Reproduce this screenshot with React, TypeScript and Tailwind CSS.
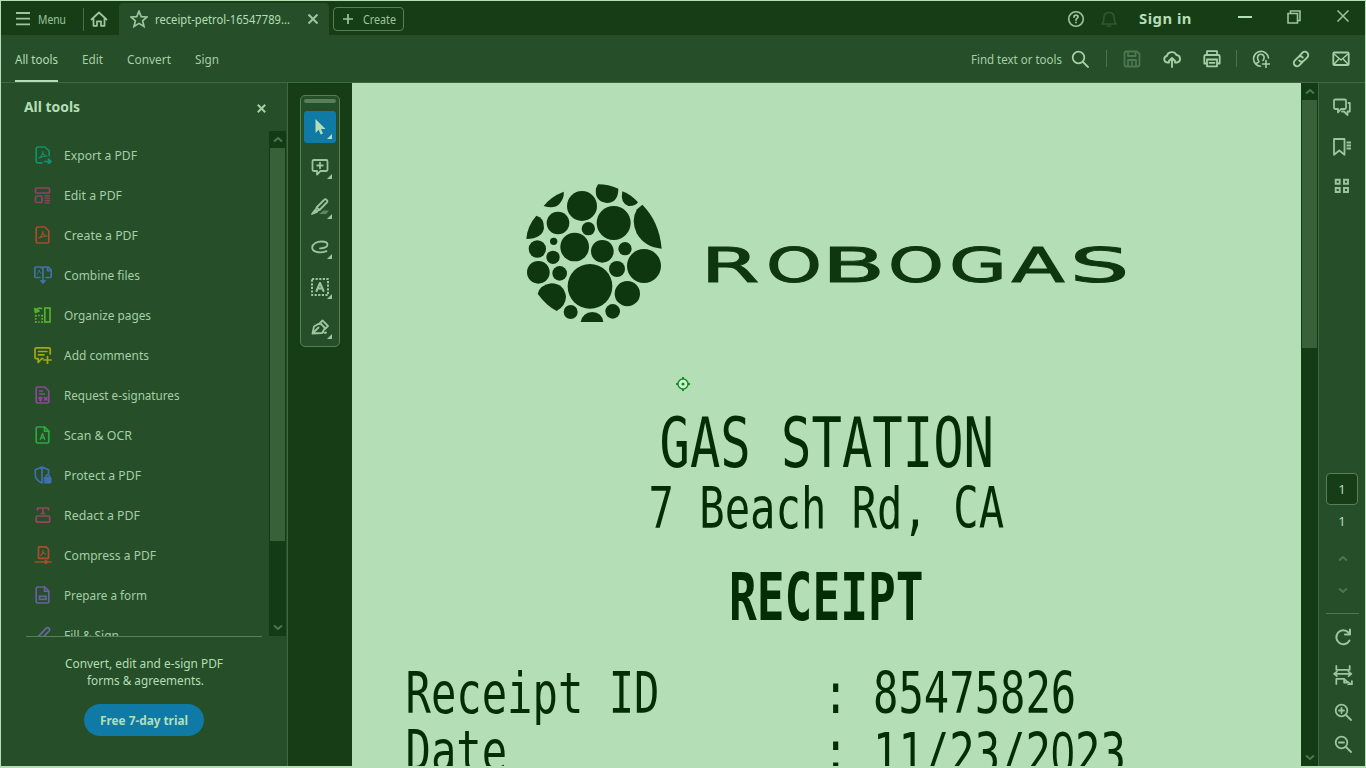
import { useLayoutEffect, useRef, type ReactNode } from "react";

/** Text squeezed horizontally so that it takes exactly `w` pixels. */
function Fit({ w, className = "", children }: { w: number; className?: string; children: string }) {
  const ref = useRef<HTMLSpanElement>(null);
  useLayoutEffect(() => {
    const el = ref.current;
    if (el && el.offsetWidth) {
      el.style.transform = "none";
      el.style.transform = `scaleX(${w / el.getBoundingClientRect().width})`;
    }
  }, [w, children]);
  return (
    <span className={`flex shrink-0 ${className}`} style={{ width: w }}>
      <span ref={ref} className="block origin-left whitespace-nowrap">
        {children}
      </span>
    </span>
  );
}

function Ico({ s = 18, sw = 1.8, className = "", children }: { s?: number; sw?: number; className?: string; children: ReactNode }) {
  return (
    <svg width={s} height={s} viewBox="0 0 18 18" fill="none" stroke="currentColor" strokeWidth={sw} strokeLinecap="round" strokeLinejoin="round" className={`shrink-0 ${className}`}>
      {children}
    </svg>
  );
}

const DOC = "M3.6 1h7.2l4 4v10.6a1.4 1.4 0 0 1-1.4 1.4H3.6a1.4 1.4 0 0 1-1.4-1.4V2.4A1.4 1.4 0 0 1 3.6 1Z";
const SWOOSH = "M5 12c2-1 4-4 3.8-6.6 0 3.3 2 4.800 4.200 4.600-3 0-5 .6-8 2Z";

const tools: { label: string; w: number; color: string; icon: ReactNode }[] = [
  { label: "Export a PDF", w: 73, color: "text-[#11906b]", icon: <><path d="M15.200 9.500V5L11 1H3.800A1.500 1.500 0 0 0 2.200 2.500v12.800A1.500 1.500 0 0 0 3.800 16.800H8" /><path d={SWOOSH} strokeWidth="1.100" /><path d="M10.500 15.500h5M14.500 13.200l2.500 2.300-2.500 2.300Z" fill="currentColor" /></> },
  { label: "Edit a PDF", w: 58, color: "text-[#8f4360]", icon: <><rect x="1.500" y="2" width="14" height="5" rx="1" /><rect x="1.500" y="10" width="6.500" height="6.500" rx="1" /><path d="M10.500 9.800h5.500M10.500 12.200h5.500M10.500 14.500h5.500M10.500 16.800h5.500" strokeWidth="1.300" strokeLinecap="butt" /></> },
  { label: "Create a PDF", w: 74, color: "text-[#a84e2c]", icon: <><path d={DOC} /><path d={SWOOSH} strokeWidth="1.100" /></> },
  { label: "Combine files", w: 76, color: "text-[#4470a8]", icon: <><path d="M6 11.500H1.800A1.200 1.200 0 0 1 .8 10.300V2.200A1.200 1.200 0 0 1 2 1h4.800L9 3v7M9 3.200A1.400 1.400 0 0 1 10.400 1h4.100L17.200 4v6.300a1.200 1.200 0 0 1-1.200 1.200h-4M13.500 1.500v3.200H17" /><path d="M2.800 8.500c1.500-1 2.500-3 2.500-4.500 0 2 1 3 2 3.200" strokeWidth="1" /><path d="M9 10v6.500M7 14.800h4L9 17Z" fill="currentColor" /></> },
  { label: "Organize pages", w: 87, color: "text-[#55b02c]", icon: <><rect x="10.800" y="2" width="5.200" height="14" strokeLinejoin="miter" /><path d="M1.500 6C2 3 5 1.500 7.500 2.500" /><path d="M.800 2.500l.7 4 3.500-1.500Z" fill="currentColor" /><path d="M1 9.500h8M1 16h8" strokeDasharray="1.700 1.400" strokeLinecap="butt" /><path d="M1.700 9v8M8.200 9v8" strokeDasharray="1.700 1.400" strokeLinecap="butt" /></> },
  { label: "Add comments", w: 85, color: "text-[#a3aa09]", icon: <><path d="M16.200 8V3A1.200 1.200 0 0 0 15 1.800H2.200A1.200 1.200 0 0 0 1 3v8.500a1.200 1.200 0 0 0 1.200 1.200h2v3.800l3.500-3.800H9M4.500 5.500h8.500M4.500 8.800h5.500" /><path d="M13.500 10.500v7M10 14h7" /></> },
  { label: "Request e-signatures", w: 115.5, color: "text-[#8b4a96]", icon: <><path d={DOC} /><path d="M5 5h4M5 8h6" strokeLinecap="butt" /><path d="M5 11.500h3L6.500 15ZM10.500 11.500l2.500 2.500M13 11.500 10.500 14" /></> },
  { label: "Scan & OCR", w: 68, color: "text-[#2ca83c]", icon: <><path d={DOC} /><path d="M10.500 1v4.200h4.200" /><path d="M6.300 13.500 8.500 7.500l2.200 6M7 11.700h3" strokeWidth="1.400" /></> },
  { label: "Protect a PDF", w: 77, color: "text-[#3f6fae]", icon: <><path d="M14.500 7.500V3.800L8 1 1.300 3.800v5.500c0 3.500 3 6 6.700 7.700V1" /><rect x="10.500" y="11.500" width="6.500" height="5.500" fill="currentColor" strokeWidth="1" /><path d="M12 11.500v-1.300a1.800 1.800 0 0 1 3.500 0v1.300" /></> },
  { label: "Redact a PDF", w: 76, color: "text-[#944660]", icon: <><path d="M3.500 3.800V2h11v1.800M9 2v5.500M7.500 7.500h3" /><rect x="2.200" y="10" width="13.500" height="6.200" rx="1" /></> },
  { label: "Compress a PDF", w: 92, color: "text-[#a84e2c]", icon: <><path d="M5.500.8h6.500l2.500 2.500v9H4.500V1.800a1 1 0 0 1 1-1Z" /><path d="M6.700 9.500C8 8.500 9 6.500 9 4.500c0 2.500 1.500 3.500 3 3.500" strokeWidth="1.100" /><path d="M1.200 16H17M11.500 14.500v3l2-1.500Z" /></> },
  { label: "Prepare a form", w: 83, color: "text-[#66619f]", icon: <><path d={DOC} /><path d="M10.500 1v4.200h4.200" /><rect x="5.500" y="10.300" width="6.500" height="3" strokeLinejoin="miter" /></> },
  { label: "Fill & Sign", w: 55, color: "text-[#6c68a2]", icon: <path d="M2.500 16l1-4.500L12 2.300a2 2 0 0 1 3 2.700L6.500 14Z" /> },
];

function Chevron({ up = false, className = "" }: { up?: boolean; className?: string }) {
  return (
    <svg width="10" height="7" viewBox="0 0 10 7" fill="none" stroke="currentColor" strokeWidth="2" className={className}>
      <path d={up ? "M1 5.500 5 2l4 3.500" : "M1 1.500 5 5l4-3.500"} />
    </svg>
  );
}

function TitleBar() {
  return (
    <header className="flex h-[34px] shrink-0 bg-[#173d17] text-[#9bc59d]">
      <div className="flex w-[118px] items-center pt-[2px]">
        <Ico className="ml-[13px]"><path d="M2 3h14M2 8.700h14M2 14.300h14" strokeWidth="1.800" strokeLinecap="butt" /></Ico>
        <Fit w={28} className="ml-[6px]">Menu</Fit>
        <i className="ml-[17px] h-[23px] w-px bg-[#44704a]" />
        <Ico className="ml-[6px]"><path d="m1.500 9.500 7.500-7 7.500 7M3.500 8.500v7.300H7v-4.500h4v4.500h3.500V8.500" /></Ico>
      </div>
      <div className="mt-[2px] flex w-[210px] items-center rounded-t-[4px] bg-[#264e28] text-[#b4deb6]">
        <Ico className="ml-[11px] text-[#9bc59d]" sw={1.700}><path d="m9 1.200 2.200 5.400 5.900.4-4.500 3.800 1.400 5.700-5-3.100-5 3.100 1.400-5.700L.9 7l5.900-.4Z" strokeLinejoin="miter" /></Ico>
        <Fit w={135} className="ml-[7px]">receipt-petrol-16547789...</Fit>
        <svg width="10" height="10" viewBox="0 0 10 10" fill="none" stroke="currentColor" strokeWidth="2.100" className="ml-[18px] text-[#9bc59d]"><path d="m.500.500 9 9M9.500.500l-9 9" /></svg>
      </div>
      <div className="ml-[4px] mt-[6px] flex h-[24px] w-[71px] items-center rounded-[4px] border border-[#568059]">
        <svg width="10" height="10" viewBox="0 0 10 10" stroke="currentColor" strokeWidth="1.700" className="ml-[9px]"><path d="M5 0v10M0 5h10" /></svg>
        <Fit w={33} className="ml-[10px]">Create</Fit>
      </div>
      <div className="ml-auto flex">
        <Ico className="mt-[9px]" sw={1.600}><circle cx="9" cy="9" r="7.300" /><path d="M7 7c0-2.600 4-2.600 4 0 0 1.300-2 1.500-2 3M9 12.300v.3" strokeWidth="1.800" /></Ico>
        <Ico className="ml-[15px] mt-[9px] text-[#31572f]" sw={1.700}><path d="M2 14c2-2 1.500-3.500 2-7 .3-3 2.500-4.500 5-4.500S13.700 4 14 7c.5 3.500 0 5 2 7ZM7.500 16h3" /></Ico>
        <Fit w={53} className="ml-[21px] mt-[6px] text-[15px] font-bold leading-[22px] tracking-[0.500px] text-[#b4deb6]">Sign in</Fit>
        <svg width="14" height="2" viewBox="0 0 14 2" className="ml-[46px] mt-[15px] bg-[#b4deb6]" />
        <svg width="14" height="14" viewBox="0 0 14 14" fill="none" stroke="currentColor" strokeWidth="1.600" className="ml-[35px] mt-[9px]"><path d="M1 3.500h9.500V13H1ZM3.500 3.500V1H13v9.500h-2.500" /></svg>
        <svg width="12" height="12" viewBox="0 0 12 12" stroke="currentColor" strokeWidth="1.500" className="ml-[36px] mr-[16px] mt-[9px]"><path d="m.500.500 11 11M11.500.500l-11 11" /></svg>
      </div>
    </header>
  );
}

function ToolBar() {
  return (
    <nav className="flex h-[48px] shrink-0 items-center border-b border-[#3e6942] bg-[#264e28] text-[#a5cfa7]">
      <div className="ml-[14px] flex h-full flex-col items-center justify-between text-[#b4deb6]">
        <Fit w={43} className="mt-[15px]">All tools</Fit>
        <i className="h-[2px] w-full bg-[#b4deb6]" />
      </div>
      <Fit w={21} className="ml-[24px]">Edit</Fit>
      <Fit w={44} className="ml-[24px]">Convert</Fit>
      <Fit w={24} className="ml-[24px]">Sign</Fit>
      <div className="ml-auto flex items-center">
        <Fit w={91}>Find text or tools</Fit>
        <Ico className="ml-[9px]"><circle cx="7.500" cy="7.500" r="5.800" /><path d="m12 12 5 5" /></Ico>
        <i className="ml-[17px] h-[17px] w-px bg-[#48754c]" />
        <Ico className="ml-[16px] text-[#4b784f]"><path d="M1.500 3A1.500 1.500 0 0 1 3 1.500h11L16.500 4v11a1.500 1.500 0 0 1-1.500 1.500H3A1.500 1.500 0 0 1 1.500 15ZM5 1.500v4.500h7.500V1.500M5 16.500V10h8v6.500M9 12v2.500" /></Ico>
        <Ico className="ml-[22px]" sw={1.900}><path d="M6 12.500H4.300A3.300 3.300 0 0 1 3.800 6 5.200 5.200 0 0 1 13.500 5a3.800 3.800 0 0 1 .5 7.500h-2M9 17V8.500M6 11l3-3 3 3" /></Ico>
        <Ico className="ml-[22px]"><path d="M4 5V1.200h10V5M4 13.500H1.300V6.200A1.200 1.200 0 0 1 2.500 5h13a1.200 1.200 0 0 1 1.200 1.200v7.300H14M4 9.500h10v6.800H4ZM6.500 12.800h5" /></Ico>
        <i className="ml-[15px] h-[17px] w-px bg-[#48754c]" />
        <Ico className="ml-[15px]" sw={1.600}><path d="M8.500 16.300A7.500 7.500 0 1 1 16.500 8M3.500 14c1-1.500 3.500-1.300 3.500-2.500C4.800 9 5 4.300 8.800 4.300s4 4 2.200 6.200M14 10.500v7M10.500 14h7" /></Ico>
        <Ico className="ml-[22px]" sw={1.900}><path d="m7.500 6 3-3.300a3.300 3.300 0 0 1 4.800 4.600L12 10.700a3.100 3.100 0 0 1-4.800-.2M10.500 12l-3 3.200a3.300 3.300 0 0 1-4.800-4.600L6 7.300a3.100 3.100 0 0 1 4.800.3" /></Ico>
        <Ico className="ml-[22px] mr-[15px]"><rect x="1.300" y="2.500" width="15.400" height="12.500" rx="1" /><path d="m2 4 7 6 7-6M2 14.300l5-5.500M16 14.300l-5-5.500" strokeWidth="1.500" /></Ico>
      </div>
    </nav>
  );
}

function ToolPanel() {
  return (
    <aside className="flex w-[287px] shrink-0 flex-col border-r border-[#3e6942] bg-[#264e28] text-[#a5cfa7]">
      <div className="flex h-[48px] shrink-0 items-center">
        <Fit w={56} className="ml-[23px] text-[14px] font-bold text-[#b4deb6]">All tools</Fit>
        <svg width="9" height="9" viewBox="0 0 9 9" stroke="currentColor" strokeWidth="2" className="ml-auto mr-[21px] mt-[3px]"><path d="m.800.800 7.400 7.400M8.200.800.800 8.200" /></svg>
      </div>
      <div className="flex h-[505px] shrink-0">
        <ul className="h-full w-[268px] overflow-hidden pt-[4px]">
          {tools.map((t) => (
            <li key={t.label} className="flex h-[40px] items-center">
              <Ico className={`ml-[33px] ${t.color}`} sw={1.700}>{t.icon}</Ico>
              <Fit w={t.w} className="ml-[12px]">{t.label}</Fit>
            </li>
          ))}
        </ul>
        <div className="flex w-[17px] flex-col items-center bg-[#133b15] text-[#4b784f]">
          <div className="flex h-[17px] items-center"><Chevron up /></div>
          <i className="h-[393px] w-[15px] bg-[#386139]" />
          <Chevron className="mb-[5px] mt-auto" />
        </div>
      </div>
      <div className="ml-[25px] h-px w-[236px] shrink-0 bg-[#568059]" />
      <div className="flex flex-col items-center pt-[18px] leading-[17px] text-[#b4deb6]">
        <Fit w={158}>Convert, edit and e-sign PDF</Fit>
        <Fit w={117} className="ml-[2px]">forms &amp; agreements.</Fit>
        <button className="mt-[15px] flex h-[32px] w-[120px] items-center justify-center rounded-full bg-[#107aa6] font-bold">
          <Fit w={88}>Free 7-day trial</Fit>
        </button>
      </div>
    </aside>
  );
}

function Palette() {
  const items: ReactNode[] = [
    <path d="M4.500 1v14l3.200-3.200 2 4.700 2.300-1-2-4.500H14.500Z" fill="currentColor" stroke="none" />,
    <path d="M2.500 2h12.800A1.200 1.200 0 0 1 16.500 3.200v8.600a1.200 1.200 0 0 1-1.200 1.200H9.500L6 16.500V13H2.700a1.200 1.200 0 0 1-1.200-1.200V3.200A1.200 1.200 0 0 1 2.500 2ZM9 4.700v5.600M6.200 7.500h5.600" />,
    <><path d="M5.500 9.500 13 2a1.700 1.700 0 0 1 2.800 2.500L8.500 12ZM5.500 9.500l-1 3 1 .7 3-1.200" /><path d="m4 12 2 2-5 2Z" fill="currentColor" /><path d="M8 16l4.500-3.500H18l-3 3.500Z" fill="#5c8a5e" stroke="none" /></>,
    <path d="M15.500 13.200C8 16 1 13.500 1.200 9.500 1.500 5.500 6 3.500 10.500 3.500c3.500 0 6 1 6 3 0 2.500-3.500 4-7.500 3.800" />,
    <><rect x="1" y="1" width="16" height="16" strokeDasharray="2.200 1.400" strokeLinecap="butt" strokeWidth="2" /><path d="M5.500 13 9 5l3.500 8M6.800 10.500h4.400" strokeWidth="2.100" /></>,
    <path d="M1.500 15.500 3 8.500 9 5l5 5-3 5-9.500.5ZM1.500 15.500l6-6M9 5l2.500-2.500L17 8l-3 3M11 15c1.500-3 2 1.500 4-.5" />,
  ];
  return (
    <div className="flex w-[64px] shrink-0 flex-col items-center bg-[#173d17] pt-[12px] text-[#9bc59d]">
      <div className="flex h-[252px] w-[40px] flex-col items-center rounded-[5px] border border-[#568059] bg-[#264e28] pt-[3px]">
        <i className="h-[4px] w-[32px] shrink-0 rounded-full bg-[#568059]" />
        <div className="mt-[8px] flex flex-col gap-[8px]">
          {items.map((icon, i) => (
            <div key={i} className={`relative flex h-[32px] w-[32px] items-center justify-center rounded-[3px] ${i === 0 ? "bg-[#107aa6] text-[#b4deb6]" : ""}`}>
              <Ico>{icon}</Ico>
              <svg width="5" height="5" viewBox="0 0 5 5" className="absolute bottom-[4px] right-[4px]"><path d="M5 0v5H0Z" fill="currentColor" /></svg>
            </div>
          ))}
        </div>
      </div>
    </div>
  );
}

const bubbles = [
  [216, 108, 45], [144, 159, 34], [235, 176, 20], [311, 159, 51], [194, 231, 43], [131, 214, 11], [82, 237, 26],
  [129, 262, 20], [277, 244, 34], [345, 236, 20], [402, 288, 51], [321, 297, 24], [85, 307, 34], [149, 310, 22],
  [240, 349, 67], [352, 371, 38], [182, 426, 21], [308, 424, 22],
];

const wordmark = [
  { c: "R", x: 0.8, s: 1.76 }, { c: "O", x: 66, s: 1.48 }, { c: "B", x: 121.8, s: 1.93 }, { c: "O", x: 188, s: 1.48 },
  { c: "G", x: 249, s: 1.56 }, { c: "A", x: 311.500, s: 1.62 }, { c: "S", x: 369.800, s: 1.96 },
];

function Logo() {
  return (
    <div className="flex h-[170px] shrink-0 text-[#0e3710]">
      <svg width="170" height="170" viewBox="0 0 510 510" className="ml-[158px]" fill="currentColor">
        {bubbles.map(([x, y, r]) => <circle key={`${x}-${y}`} cx={x} cy={y} r={r} />)}
        <path d="M101 108Q122 80 161 65Q164 82 148 102Q132 118 101 108Z" />
        <path d="M264 43Q295 43 325 56Q325 98 290 99Q252 94 258 55Z" />
        <path d="M337 64Q362 73 384 97Q374 110 355 108Q330 99 337 64Z" />
        <path d="M397 104Q448 155 455 236Q405 233 380 190Q362 150 381 118Z" />
        <path d="M79 137Q102 142 102 174Q97 206 49 207Q52 167 79 137Z" />
        <path d="M83 371Q90 345 124 340Q162 341 168 380Q167 407 140 423Q107 405 83 371Z" />
        <path d="M212 456Q218 427 247 426Q276 427 280 456Z" />
      </svg>
      <svg width="440" height="80" viewBox="0 0 440 80" className="ml-[20px] mt-[54px]" fill="currentColor">
        {wordmark.map((l, i) => (
          <text key={i} transform={`translate(${l.x} 58) scale(${l.s} 1)`} className="font-['DejaVu_Sans'] text-[48px]" stroke="currentColor" strokeWidth="1">{l.c}</text>
        ))}
      </svg>
    </div>
  );
}

function Row({ label, value }: { label: string; value: string }) {
  return (
    <div className="flex h-[58px] shrink-0 text-[42.200px] leading-none">
      <span className="ml-[53.500px] w-[417.500px] origin-top scale-y-[1.366]">{label}</span>
      <span className="w-[50px] origin-top scale-y-[1.366]">:</span>
      <span className="origin-top scale-y-[1.366]">
        {value.split("").map((c, i) => (
          <span key={i} className={c === "0" ? "inline-block w-[1ch] text-center font-['Noto_Sans']" : ""}>{c}</span>
        ))}
      </span>
    </div>
  );
}

function Page() {
  return (
    <main className="flex w-[949px] shrink-0 flex-col overflow-hidden whitespace-pre bg-[#b4deb6] font-['DejaVu_Sans_Mono',monospace] text-[#032e05]">
      <div className="h-[87px] shrink-0" />
      <Logo />
      <div className="h-[69px] shrink-0 pl-[324px] pt-[37px]">
        <svg width="14" height="14" viewBox="0 0 14 14" fill="none" stroke="#11911c" strokeWidth="1.500">
          <circle cx="7" cy="7" r="5" fill="#d6efd7" /><circle cx="7" cy="7" r="1.600" fill="#11911c" stroke="none" />
          <path d="M7 0v2M7 12v2M0 7h2M12 7h2" strokeWidth="2" />
        </svg>
      </div>
      <div className="ml-[307.500px] h-[71px] shrink-0 text-[50.500px] leading-none"><span className="block origin-top scale-y-[1.390]">GAS STATION</span></div>
      <div className="ml-[296.500px] h-[84px] shrink-0 text-[42.200px] leading-none"><span className="block origin-top scale-y-[1.366]">7 Beach Rd, CA</span></div>
      <div className="ml-[377px] h-[101px] shrink-0 text-[46.200px] font-bold leading-none"><span className="block origin-top scale-y-[1.430]">RECEIPT</span></div>
      <Row label="Receipt ID" value="85475826" />
      <Row label="Date" value="11/23/2023" />
    </main>
  );
}

function RightRail() {
  return (
    <aside className="flex w-[47px] shrink-0 flex-col items-center border-l border-[#3e6942] bg-[#264e28] text-[#9bc59d]">
      <Ico className="mt-[15px]"><path d="M2.200 1.500h9.600a1.200 1.200 0 0 1 1.200 1.200v7.100a1.200 1.200 0 0 1-1.200 1.200H8l-3 3.300V11H2.200A1.200 1.200 0 0 1 1 9.800V2.700a1.200 1.200 0 0 1 1.200-1.200ZM15.500 5h1.300v8.500h-2.300V17L11 13.500H9" /></Ico>
      <Ico className="mt-[22px]"><path d="M1 1h10.500v15.800L6.300 12.500 1 16.800Z" /><path d="M13.500 4.500H18M13.500 7.500H18M13.500 10.500H18" strokeLinecap="butt" /></Ico>
      <Ico className="mt-[21px]" sw={1.900}><path d="M2.700 2.700h4v4h-4ZM11 2.700h4v4h-4ZM2.700 11h4v4h-4ZM11 11h4v4h-4Z" strokeLinejoin="miter" /></Ico>
      <div className="mt-[278px] flex h-[32px] w-[32px] items-center justify-center rounded-[4px] border border-[#568059] bg-[#173d17] text-[#b4deb6]"><span className="-mt-px">1</span></div>
      <div className="mt-[8px] leading-[17px] text-[#b4deb6]">1</div>
      <Chevron up className="ml-[2px] mt-[25px] text-[#4b784f]" />
      <Chevron className="ml-[2px] mt-[25px] text-[#4b784f]" />
      <i className="mt-[19px] h-px w-[33px] bg-[#4b784f]" />
      <Ico className="ml-[2px] mt-[14px]" sw={2}><path d="M15.500 12.500A7 7 0 1 1 14.500 4.500M16 1.500v5h-5" /></Ico>
      <Ico s={20} className="ml-[2px] mt-[19px]"><path d="M3 .8v3.500h12V.8M1 8h15M3.500 6 1 8l2.500 2M14 6l2.500 2L14 10M3 17v-4.500h7l3 3M10 12.500v3.300h3.500M13 15l4 3M17 14.500v3.500h-3.500" strokeWidth="1.600" /></Ico>
      <Ico className="ml-[2px] mt-[18px]"><circle cx="7.500" cy="7.500" r="5.800" /><path d="m12 12 5 5M7.500 5v5M5 7.500h5" /></Ico>
      <Ico className="ml-[2px] mt-[14px]"><circle cx="7.500" cy="7.500" r="5.800" /><path d="m12 12 5 5M5 7.500h5" /></Ico>
    </aside>
  );
}

export default function App() {
  return (
    <div className="flex h-[768px] w-[1366px] flex-col overflow-hidden border border-b-2 border-[#b4deb6] font-['Noto_Sans',sans-serif] text-[13px] leading-[18px]">
      <TitleBar />
      <ToolBar />
      <div className="flex h-[683px] shrink-0">
        <ToolPanel />
        <Palette />
        <Page />
        <div className="flex w-[17px] shrink-0 flex-col items-center bg-[#133b15] text-[#4b784f]">
          <div className="flex h-[17px] items-center"><Chevron up /></div>
          <i className="h-[248px] w-[15px] bg-[#386139]" />
          <Chevron className="mb-[5px] mt-auto" />
        </div>
        <RightRail />
      </div>
    </div>
  );
}
